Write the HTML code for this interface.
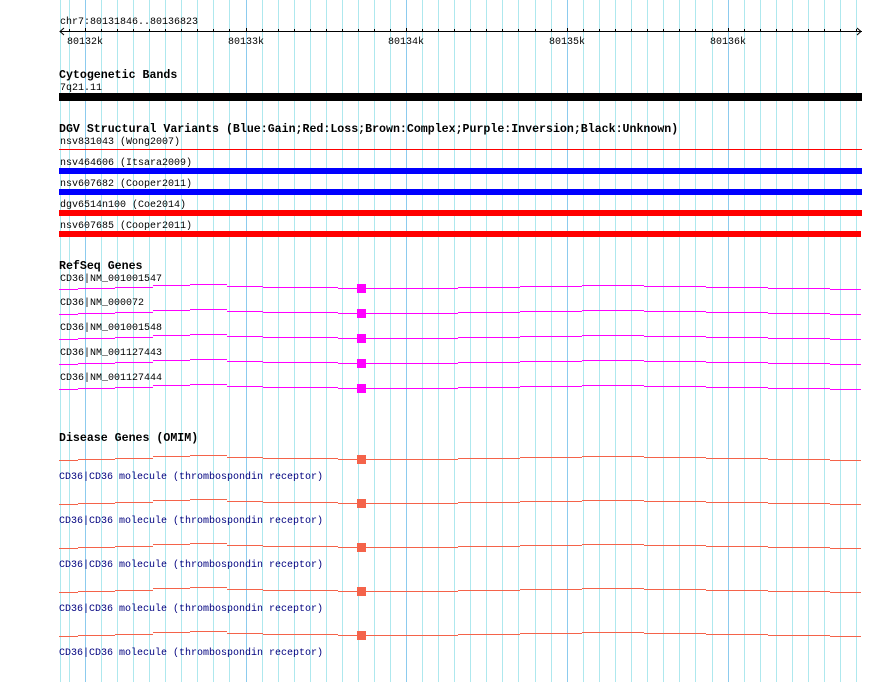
<!DOCTYPE html>
<html><head><meta charset="utf-8"><style>
html,body{margin:0;padding:0;background:#fff;}
svg{display:block;}
text{font-family:"Liberation Mono","DejaVu Sans Mono",monospace;font-size:10px;fill:#000;}
.b{font-weight:bold;font-size:11.6px;}
.d{fill:#00007f;}
</style></head><body>
<svg width="890" height="682" viewBox="0 0 890 682" xmlns="http://www.w3.org/2000/svg" shape-rendering="crispEdges">
<defs>
<g id="grid">
</g>
<g id="gl">
<rect x="59" y="0" width="19" height="1"/>
<rect x="78" y="-1" width="37" height="1"/>
<rect x="115" y="-2" width="38" height="1"/>
<rect x="153" y="-4" width="37" height="1"/>
<rect x="190" y="-5" width="37" height="1"/>
<rect x="227" y="-3" width="36" height="1"/>
<rect x="263" y="-2" width="37" height="1"/>
<rect x="300" y="-2" width="38" height="1"/>
<rect x="338" y="-1" width="58" height="1"/>
<rect x="396" y="-1" width="62" height="1"/>
<rect x="458" y="-2" width="62" height="1"/>
<rect x="520" y="-3" width="62" height="1"/>
<rect x="582" y="-4" width="62" height="1"/>
<rect x="644" y="-3" width="62" height="1"/>
<rect x="706" y="-2" width="62" height="1"/>
<rect x="768" y="-1" width="62" height="1"/>
<rect x="830" y="0" width="31" height="1"/>
<rect x="357" y="-5" width="9" height="9"/>
</g>
</defs>
<!-- grid -->
<g fill="#aee8ee">
<rect x="60" y="0" width="1" height="682"/>
<rect x="69" y="0" width="1" height="682"/><rect x="101" y="0" width="1" height="682"/><rect x="117" y="0" width="1" height="682"/><rect x="133" y="0" width="1" height="682"/><rect x="149" y="0" width="1" height="682"/><rect x="165" y="0" width="1" height="682"/><rect x="181" y="0" width="1" height="682"/><rect x="197" y="0" width="1" height="682"/><rect x="213" y="0" width="1" height="682"/><rect x="229" y="0" width="1" height="682"/>
<rect x="262" y="0" width="1" height="682"/><rect x="278" y="0" width="1" height="682"/><rect x="294" y="0" width="1" height="682"/><rect x="310" y="0" width="1" height="682"/><rect x="326" y="0" width="1" height="682"/><rect x="342" y="0" width="1" height="682"/><rect x="358" y="0" width="1" height="682"/><rect x="374" y="0" width="1" height="682"/><rect x="390" y="0" width="1" height="682"/>
<rect x="422" y="0" width="1" height="682"/><rect x="438" y="0" width="1" height="682"/><rect x="454" y="0" width="1" height="682"/><rect x="470" y="0" width="1" height="682"/><rect x="486" y="0" width="1" height="682"/><rect x="502" y="0" width="1" height="682"/><rect x="518" y="0" width="1" height="682"/><rect x="535" y="0" width="1" height="682"/><rect x="551" y="0" width="1" height="682"/>
<rect x="583" y="0" width="1" height="682"/><rect x="599" y="0" width="1" height="682"/><rect x="615" y="0" width="1" height="682"/><rect x="631" y="0" width="1" height="682"/><rect x="647" y="0" width="1" height="682"/><rect x="663" y="0" width="1" height="682"/><rect x="679" y="0" width="1" height="682"/><rect x="695" y="0" width="1" height="682"/><rect x="712" y="0" width="1" height="682"/>
<rect x="744" y="0" width="1" height="682"/><rect x="760" y="0" width="1" height="682"/><rect x="776" y="0" width="1" height="682"/><rect x="792" y="0" width="1" height="682"/><rect x="808" y="0" width="1" height="682"/><rect x="824" y="0" width="1" height="682"/><rect x="840" y="0" width="1" height="682"/><rect x="856" y="0" width="1" height="682"/>
</g>
<g fill="#8ccbee">
<rect x="85" y="0" width="1" height="682"/><rect x="246" y="0" width="1" height="682"/><rect x="406" y="0" width="1" height="682"/><rect x="567" y="0" width="1" height="682"/><rect x="728" y="0" width="1" height="682"/>
</g>
<!-- ruler -->
<text x="60" y="24">chr7:80131846..80136823</text>
<rect x="60" y="31" width="802" height="1" fill="#000"/>
<path d="M64 28 L60 31.5 L64 35 M857 28 L861 31.5 L857 35" stroke="#000" fill="none" shape-rendering="auto"/>
<g fill="#000">
<rect x="69" y="29" width="1" height="2"/><rect x="85" y="28" width="1" height="3"/><rect x="101" y="29" width="1" height="2"/><rect x="117" y="29" width="1" height="2"/><rect x="133" y="29" width="1" height="2"/><rect x="149" y="29" width="1" height="2"/><rect x="165" y="29" width="1" height="2"/><rect x="181" y="29" width="1" height="2"/><rect x="197" y="29" width="1" height="2"/><rect x="213" y="29" width="1" height="2"/><rect x="229" y="29" width="1" height="2"/><rect x="246" y="28" width="1" height="3"/><rect x="262" y="29" width="1" height="2"/><rect x="278" y="29" width="1" height="2"/><rect x="294" y="29" width="1" height="2"/><rect x="310" y="29" width="1" height="2"/><rect x="326" y="29" width="1" height="2"/><rect x="342" y="29" width="1" height="2"/><rect x="358" y="29" width="1" height="2"/><rect x="374" y="29" width="1" height="2"/><rect x="390" y="29" width="1" height="2"/><rect x="406" y="28" width="1" height="3"/><rect x="422" y="29" width="1" height="2"/><rect x="438" y="29" width="1" height="2"/><rect x="454" y="29" width="1" height="2"/><rect x="470" y="29" width="1" height="2"/><rect x="486" y="29" width="1" height="2"/><rect x="502" y="29" width="1" height="2"/><rect x="518" y="29" width="1" height="2"/><rect x="535" y="29" width="1" height="2"/><rect x="551" y="29" width="1" height="2"/><rect x="567" y="28" width="1" height="3"/><rect x="583" y="29" width="1" height="2"/><rect x="599" y="29" width="1" height="2"/><rect x="615" y="29" width="1" height="2"/><rect x="631" y="29" width="1" height="2"/><rect x="647" y="29" width="1" height="2"/><rect x="663" y="29" width="1" height="2"/><rect x="679" y="29" width="1" height="2"/><rect x="695" y="29" width="1" height="2"/><rect x="712" y="29" width="1" height="2"/><rect x="728" y="28" width="1" height="3"/><rect x="744" y="29" width="1" height="2"/><rect x="760" y="29" width="1" height="2"/><rect x="776" y="29" width="1" height="2"/><rect x="792" y="29" width="1" height="2"/><rect x="808" y="29" width="1" height="2"/><rect x="824" y="29" width="1" height="2"/><rect x="840" y="29" width="1" height="2"/><rect x="856" y="29" width="1" height="2"/>
</g>
<text x="67" y="44">80132k</text><text x="228" y="44">80133k</text><text x="388" y="44">80134k</text><text x="549" y="44">80135k</text><text x="710" y="44">80136k</text>
<!-- cytobands -->
<text class="b" x="59" y="78">Cytogenetic Bands</text>
<text x="60" y="90">7q21.11</text>
<rect x="59" y="93" width="803" height="8" fill="#000"/>
<!-- DGV -->
<text class="b" x="59" y="132">DGV Structural Variants (Blue:Gain;Red:Loss;Brown:Complex;Purple:Inversion;Black:Unknown)</text>
<text x="60" y="144">nsv831043 (Wong2007)</text>
<rect x="59" y="149" width="803" height="1" fill="#f00"/>
<text x="60" y="165">nsv464606 (Itsara2009)</text>
<rect x="59" y="168" width="803" height="6" fill="#00f"/>
<text x="60" y="186">nsv607682 (Cooper2011)</text>
<rect x="59" y="189" width="803" height="6" fill="#00f"/>
<text x="60" y="207">dgv6514n100 (Coe2014)</text>
<rect x="59" y="210" width="803" height="6" fill="#f00"/>
<text x="60" y="228">nsv607685 (Cooper2011)</text>
<rect x="59" y="231" width="802" height="6" fill="#f00"/>
<!-- RefSeq -->
<text class="b" x="59" y="269">RefSeq Genes</text>
<text x="60" y="281">CD36|NM_001001547</text>
<text x="60" y="305">CD36|NM_000072</text>
<text x="60" y="330">CD36|NM_001001548</text>
<text x="60" y="355">CD36|NM_001127443</text>
<text x="60" y="380">CD36|NM_001127444</text>
<g fill="#f0f">
<use href="#gl" y="289"/><use href="#gl" y="314"/><use href="#gl" y="339"/><use href="#gl" y="364"/><use href="#gl" y="389"/>
</g>
<!-- OMIM -->
<text class="b" x="59" y="441">Disease Genes (OMIM)</text>
<g fill="#f4634a">
<use href="#gl" y="460"/><use href="#gl" y="504"/><use href="#gl" y="548"/><use href="#gl" y="592"/><use href="#gl" y="636"/>
</g>
<text class="d" x="59" y="479">CD36|CD36 molecule (thrombospondin receptor)</text>
<text class="d" x="59" y="523">CD36|CD36 molecule (thrombospondin receptor)</text>
<text class="d" x="59" y="567">CD36|CD36 molecule (thrombospondin receptor)</text>
<text class="d" x="59" y="611">CD36|CD36 molecule (thrombospondin receptor)</text>
<text class="d" x="59" y="655">CD36|CD36 molecule (thrombospondin receptor)</text>
</svg>
</body></html>
